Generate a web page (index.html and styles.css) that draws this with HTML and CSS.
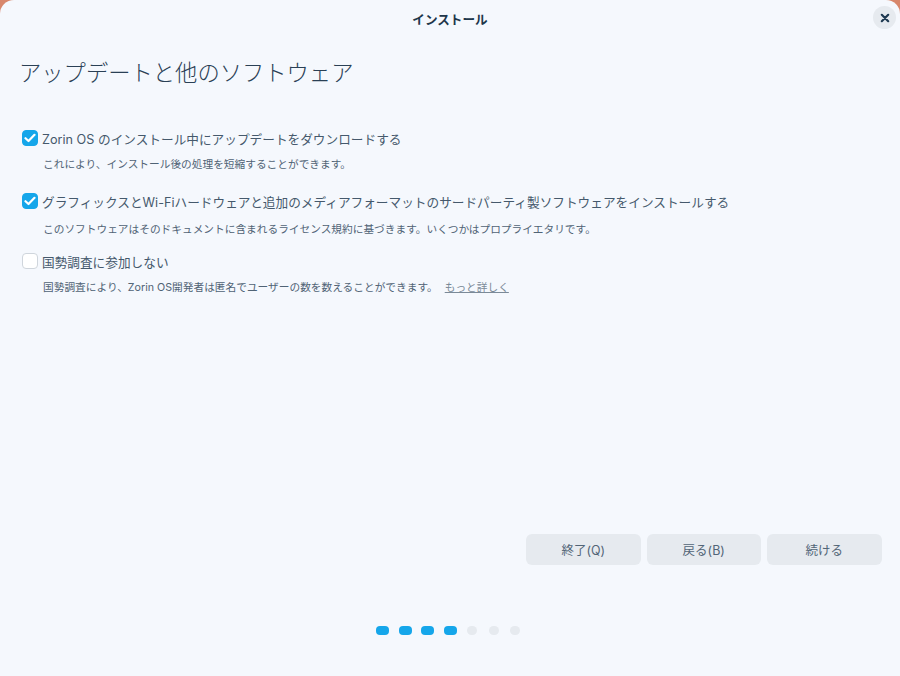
FILE: index.html
```html
<!DOCTYPE html>
<html lang="ja">
<head>
<meta charset="utf-8">
<title>インストール</title>
<link rel="stylesheet" href="styles.css">
</head>
<body>
<div class="window">
  <header class="titlebar">
    <span class="title">インストール</span>
    <button class="close" aria-label="閉じる">
      <svg width="10" height="10" viewBox="0 0 10 10"><path d="M1.8 1.8L8.2 8.2M8.2 1.8L1.8 8.2" stroke="#1f3a52" stroke-width="2.2" stroke-linecap="round"/></svg>
    </button>
  </header>
  <main class="content">
    <h1 class="heading">アップデートと他のソフトウェア</h1>
    <div class="options">
      <div class="option first">
        <div class="check-row">
          <span class="box on"><svg width="12" height="10" viewBox="0 0 12 10"><path d="M1.5 5.2L4.5 8L10.5 1.8" fill="none" stroke="#fff" stroke-width="2.2" stroke-linecap="round" stroke-linejoin="round"/></svg></span>
          <span class="label">Zorin OS のインストール中にアップデートをダウンロードする</span>
        </div>
        <p class="desc">これにより、インストール後の処理を短縮することができます。</p>
      </div>
      <div class="option second">
        <div class="check-row">
          <span class="box on"><svg width="12" height="10" viewBox="0 0 12 10"><path d="M1.5 5.2L4.5 8L10.5 1.8" fill="none" stroke="#fff" stroke-width="2.2" stroke-linecap="round" stroke-linejoin="round"/></svg></span>
          <span class="label">グラフィックスとWi-Fiハードウェアと追加のメディアフォーマットのサードパーティ製ソフトウェアをインストールする</span>
        </div>
        <p class="desc">このソフトウェアはそのドキュメントに含まれるライセンス規約に基づきます。いくつかはプロプライエタリです。</p>
      </div>
      <div class="option third">
        <div class="check-row">
          <span class="box"></span>
          <span class="label">国勢調査に参加しない</span>
        </div>
        <p class="desc">国勢調査により、Zorin OS開発者は匿名でユーザーの数を数えることができます。<a class="more" href="#">もっと詳しく</a></p>
      </div>
    </div>
    <div class="actions">
      <button class="btn">終了(Q)</button>
      <button class="btn">戻る(B)</button>
      <button class="btn">続ける</button>
    </div>
    <div class="dots">
      <span class="dot done"></span>
      <span class="dot done"></span>
      <span class="dot done"></span>
      <span class="dot done"></span>
      <span class="dot"></span>
      <span class="dot"></span>
      <span class="dot"></span>
    </div>
  </main>
</div>
</body>
</html>
```
FILE: styles.css
```css
* { box-sizing: border-box; }
html, body { margin: 0; height: 100%; }
body {
  width: 900px;
  height: 676px;
  overflow: hidden;
  background: #d8876c;
  font-family: "Inter", "Noto Sans CJK JP", sans-serif;
}
.window {
  width: 900px;
  height: 676px;
  background: #f5f8fd;
  border-radius: 14px 14px 0 0;
  display: flex;
  flex-direction: column;
}
.titlebar {
  height: 37px;
  flex: none;
  display: flex;
  align-items: center;
  justify-content: center;
  position: relative;
}
.title {
  font-size: 12.6px;
  font-weight: 700;
  color: #20364a;
}
.close {
  position: absolute;
  right: 4px;
  top: 6px;
  width: 23px;
  height: 23px;
  padding: 0;
  border: 0;
  border-radius: 50%;
  background: #e6eaef;
  display: flex;
  align-items: center;
  justify-content: center;
}
.content {
  flex: 1;
  display: flex;
  flex-direction: column;
  padding: 0 19px;
}
.heading {
  margin: 20px 0 0;
  font-size: 22.3px;
  line-height: 32px;
  font-weight: 300;
  color: #2a4055;
}
.options {
  display: flex;
  flex-direction: column;
  margin-top: 39px;
  padding-left: 3px;
}
.option.second { margin-top: 18px; }
.option.third { margin-top: 13px; }
.check-row {
  display: flex;
  align-items: center;
  gap: 4px;
  height: 20px;
}
.box {
  width: 16px;
  height: 16px;
  border-radius: 4px;
  border: 1px solid #cfd5dc;
  background: #fff;
  display: flex;
  align-items: center;
  justify-content: center;
  flex: none;
}
.box.on {
  background: #15a6ea;
  border-color: #15a6ea;
}
.label {
  font-size: 12.67px;
  color: #45596c;
  white-space: nowrap;
}
.desc {
  margin: 9px 0 0 21px;
  font-size: 10.7px;
  line-height: 16px;
  color: #506375;
  white-space: nowrap;
}
.second .desc { margin-top: 11px; }
.more {
  margin-left: 7px;
  color: #7b8a98;
  text-decoration: underline;
}
.actions {
  margin-top: 238px;
  display: flex;
  justify-content: flex-end;
  gap: 6px;
  margin-right: -0.5px;
}
.btn {
  width: 114.5px;
  height: 31px;
  border: 0;
  border-radius: 6px;
  background: #e6eaef;
  color: #526577;
  font: inherit;
  font-size: 12.5px;
  font-weight: 400;
  padding: 0;
}
.dots {
  margin-top: 61px;
  padding-right: 3px;
  display: flex;
  justify-content: center;
  align-items: center;
  gap: 9.5px;
}
.dot {
  width: 10px;
  height: 9px;
  border-radius: 5px;
  background: #e6eaef;
  margin: 0 1px;
}
.dot.done {
  width: 13px;
  background: #15a6ea;
  border-radius: 4px;
  margin: 0;
}
```
